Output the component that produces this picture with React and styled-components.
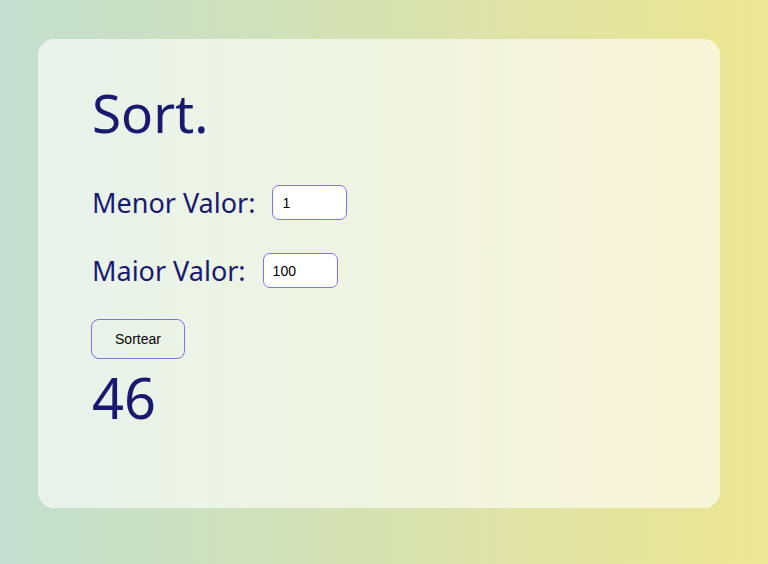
import React from "react";
import styled, { createGlobalStyle } from "styled-components";

const Global = createGlobalStyle`
  html, body { margin: 0; padding: 0; height: 100%; }
  body {
    background: linear-gradient(90deg, #c3dfd0 0%, #d5e2b4 45%, #ede692 100%);
    font-family: "Noto Sans", "Open Sans", sans-serif;
  }
  #root { height: 100%; }
`;

const Page = styled.div`
  box-sizing: border-box;
  height: 564px;
  padding: 39px 48px 56px 38px;
  display: flex;
`;

const Card = styled.main`
  flex: 1;
  box-sizing: border-box;
  border-radius: 16px;
  background: rgba(255, 255, 255, 0.62);
  padding: 47px 54px;
  display: flex;
  flex-direction: column;
  align-items: flex-start;
  color: #191970;
  & > * { flex-shrink: 0; }
`;

const Title = styled.h1`
  margin: 0 0 46px;
  font-size: 53px;
  font-weight: 400;
  line-height: 1;
`;

const Field = styled.label`
  display: flex;
  align-items: center;
  gap: 17px;
  font-size: 27px;
  line-height: 1;
  margin-bottom: ${(p) => p.$mb || 0}px;
`;

const Input = styled.input`
  box-sizing: border-box;
  width: 75px;
  height: 35px;
  border: 1px solid #7b74ee;
  border-radius: 7px;
  background: #fff;
  padding: 0 9px;
  font-family: "Liberation Sans", Arial, sans-serif;
  font-size: 14px;
  color: #000;
  outline: none;
`;

const Button = styled.button`
  box-sizing: border-box;
  width: 94px;
  height: 40px;
  margin: 31px 0 0 -1px;
  border: 1px solid #7b74ee;
  border-radius: 8px;
  background: transparent;
  font-family: "Liberation Sans", Arial, sans-serif;
  font-size: 14px;
  color: #000;
`;

const Result = styled.div`
  font-size: 56px;
  line-height: 1;
  margin-top: 10px;
`;

export default function App() {
  return (
    <>
      <Global />
      <Page>
        <Card>
          <Title>Sort.</Title>
          <Field $mb={33}>
            Menor Valor: <Input defaultValue="1" />
          </Field>
          <Field>
            Maior Valor: <Input defaultValue="100" />
          </Field>
          <Button>Sortear</Button>
          <Result>46</Result>
        </Card>
      </Page>
    </>
  );
}
